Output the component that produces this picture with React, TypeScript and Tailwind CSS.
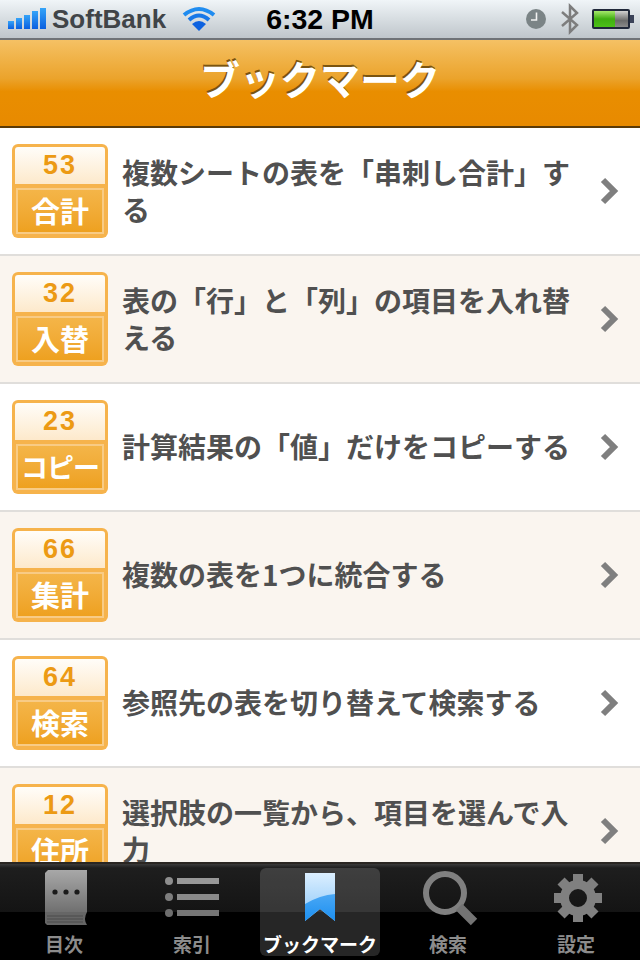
import React from "react";

const cjk = "font-['Noto_Sans_CJK_JP','Noto_Sans',sans-serif]";

const rows = [
  { n: "53", label: "合計", text: "複数シートの表を「串刺し合計」する" },
  { n: "32", label: "入替", text: "表の「行」と「列」の項目を入れ替える" },
  { n: "23", label: "コピー", text: "計算結果の「値」だけをコピーする" },
  { n: "66", label: "集計", text: "複数の表を1つに統合する" },
  { n: "64", label: "検索", text: "参照先の表を切り替えて検索する" },
  { n: "12", label: "住所", text: "選択肢の一覧から、項目を選んで入力" },
];

function Badge({ n, label }: { n: string; label: string }) {
  return (
    <div className="w-[96px] h-[94px] shrink-0 rounded-[6px] bg-[#f6b34c] p-[3px] flex flex-col">
      <div className="h-[37px] rounded-t-[3px] bg-gradient-to-b from-[#fffdf9] to-[#fde9cb] flex items-center justify-center text-[#ec9a14] text-[27px] font-bold tracking-[2px] font-['Liberation_Sans',sans-serif] leading-none">
        {n}
      </div>
      <div className="mt-[4px] flex-1 mb-[1px] mx-[1px] border-[2px] border-[#f8cb85] bg-gradient-to-b from-[#f4b548] to-[#eea11f] flex items-center justify-center text-white font-bold leading-none whitespace-nowrap">
        <span className={label.length > 2 ? "text-[27px] tracking-[-1px] pb-[2px]" : "text-[29px] pb-[2px]"}>{label}</span>
      </div>
    </div>
  );
}

function Chevron() {
  return (
    <svg width="20" height="28" viewBox="0 0 20 28" className="shrink-0">
      <path d="M3 3 L14 14 L3 25" fill="none" stroke="#7f7f7f" strokeWidth="6" />
    </svg>
  );
}

function Row({ n, label, text, alt }: { n: string; label: string; text: string; alt: boolean }) {
  return (
    <div className={`h-[128px] shrink-0 flex items-center pl-[12px] pr-[16px] border-b-2 border-[#e0dedb] ${alt ? "bg-[#faf5ef]" : "bg-white"}`}>
      <Badge n={n} label={label} />
      <div className="ml-[14px] w-[456px] mr-[22px] shrink-0 pb-[1px] text-[28px] leading-[37px] font-bold text-[#505050]">{text}</div>
      <Chevron />
    </div>
  );
}

function Signal() {
  return (
    <svg width="38" height="22" viewBox="0 0 38 22">
      <defs>
        <linearGradient id="sg" x1="0" y1="0" x2="0" y2="1">
          <stop offset="0" stopColor="#35a4f8" />
          <stop offset="1" stopColor="#0a5fe0" />
        </linearGradient>
      </defs>
      <rect x="0" y="13" width="6" height="8" fill="url(#sg)" />
      <rect x="8" y="10" width="6" height="11" fill="url(#sg)" />
      <rect x="16" y="7" width="6" height="14" fill="url(#sg)" />
      <rect x="24" y="3" width="6" height="18" fill="url(#sg)" />
      <rect x="32" y="0" width="6" height="21" fill="url(#sg)" />
    </svg>
  );
}

function Wifi() {
  return (
    <svg width="34" height="26" viewBox="0 0 34 26">
      <path d="M2 9 Q17 -3 32 9" fill="none" stroke="#1f8cf0" strokeWidth="4" />
      <path d="M7 14 Q17 5 27 14" fill="none" stroke="#1878e8" strokeWidth="4" />
      <path d="M17 25 L10 18 Q17 12 24 18 Z" fill="#0d62e0" />
    </svg>
  );
}

function Battery() {
  return (
    <svg width="42" height="22" viewBox="0 0 42 22">
      <defs>
        <linearGradient id="bg" x1="0" y1="0" x2="0" y2="1">
          <stop offset="0" stopColor="#a6e86c" />
          <stop offset="0.5" stopColor="#3fae10" />
          <stop offset="1" stopColor="#4cc018" />
        </linearGradient>
        <linearGradient id="bg2" x1="0" y1="0" x2="0" y2="1">
          <stop offset="0" stopColor="#d0d0d0" />
          <stop offset="0.6" stopColor="#6a6a6a" />
          <stop offset="1" stopColor="#8a8a8a" />
        </linearGradient>
      </defs>
      <rect x="0" y="1" width="38" height="20" rx="2" fill="#20283a" />
      <rect x="2" y="3" width="21" height="16" fill="url(#bg)" />
      <rect x="23" y="3" width="13" height="16" fill="url(#bg2)" />
      <rect x="38" y="7" width="4" height="8" fill="#3a4258" />
    </svg>
  );
}

function BookIcon() {
  return (
    <svg width="44" height="56" viewBox="0 0 44 56" className="ml-[6px]">
      <defs>
        <linearGradient id="book" x1="0" y1="0" x2="0" y2="1">
          <stop offset="0" stopColor="#a8a8a8" />
          <stop offset="1" stopColor="#707070" />
        </linearGradient>
      </defs>
      <path d="M3 0 H42 V42 H0 V3 Z" fill="url(#book)" />
      <path d="M0 42 H42 Q38 49 42 55 H2 L0 53 Z" fill="#666" />
      <path d="M2 46 H38 M2 49 H38 M2 52 H38" stroke="#4a4a4a" strokeWidth="1" />
      <circle cx="10" cy="22" r="2.6" fill="#1b1b1b" />
      <circle cx="21" cy="22" r="2.6" fill="#1b1b1b" />
      <circle cx="32" cy="22" r="2.6" fill="#1b1b1b" />
    </svg>
  );
}

function ListIcon() {
  return (
    <svg width="56" height="44" viewBox="0 0 56 44">
      <circle cx="5" cy="5" r="4" fill="#8e8e8e" />
      <circle cx="5" cy="21" r="4" fill="#7e7e7e" />
      <circle cx="5" cy="37" r="4" fill="#6e6e6e" />
      <rect x="13" y="2" width="42" height="6" fill="#989898" />
      <rect x="13" y="18" width="42" height="6" fill="#8a8a8a" />
      <rect x="13" y="34" width="42" height="6" fill="#767676" />
    </svg>
  );
}

function BookmarkIcon() {
  return (
    <svg width="32" height="50" viewBox="0 0 32 50">
      <defs>
        <linearGradient id="bm" x1="0" y1="0" x2="0" y2="1">
          <stop offset="0" stopColor="#dcefff" />
          <stop offset="0.6" stopColor="#a9d6fb" />
        </linearGradient>
        <linearGradient id="bm2" x1="0" y1="0" x2="0" y2="1">
          <stop offset="0" stopColor="#4aa8f5" />
          <stop offset="1" stopColor="#1c8ff0" />
        </linearGradient>
      </defs>
      <path d="M1 0 H31 V48 L16 36 L1 48 Z" fill="url(#bm)" />
      <path d="M1 31 Q16 22 31 21 V48 L16 36 L1 48 Z" fill="url(#bm2)" />
    </svg>
  );
}

function SearchIcon() {
  return (
    <svg width="56" height="56" viewBox="0 0 56 56" className="ml-[4px]">
      <circle cx="23" cy="23" r="19" fill="none" stroke="#808080" strokeWidth="6" />
      <path d="M37 37 L52 52" stroke="#747474" strokeWidth="9" />
    </svg>
  );
}

function GearIcon() {
  const teeth = [0, 45, 90, 135, 180, 225, 270, 315];
  return (
    <svg width="48" height="48" viewBox="0 0 48 48" className="ml-[4px]">
      {teeth.map((a) => (
        <rect key={a} x="19" y="0" width="10" height="12" fill="#808080" transform={`rotate(${a} 24 24)`} />
      ))}
      <circle cx="24" cy="24" r="13.5" fill="none" stroke="#808080" strokeWidth="9" />
    </svg>
  );
}

function Tab({ label, children, active }: { label: string; children: React.ReactNode; active?: boolean }) {
  return (
    <div className={`w-[120px] mx-[4px] h-[88px] shrink-0 flex flex-col items-center rounded-[6px] ${active ? "bg-white/15" : ""}`}>
      <div className="h-[60px] flex items-center justify-center">{children}</div>
      <div className={`text-[19px] leading-[24px] font-bold whitespace-nowrap mt-[4px] ${active ? "text-white" : "text-[#8c8c8c]"}`}>{label}</div>
    </div>
  );
}

export default function App() {
  return (
    <div className={`w-[640px] h-[960px] overflow-hidden flex flex-col ${cjk}`}>
      <div className="h-[40px] shrink-0 flex items-center pl-[8px] pr-[6px] bg-gradient-to-b from-[#f0f5f8] to-[#bfc6cb] border-b-2 border-[#6f7377] font-['Liberation_Sans',sans-serif]">
        <Signal />
        <span className="ml-[6px] text-[26px] font-bold text-[#404448] leading-none">SoftBank</span>
        <span className="ml-[16px]"><Wifi /></span>
        <span className="ml-[50px] text-[28.5px] font-bold text-black leading-none whitespace-nowrap">6:32 PM</span>
        <div className="ml-auto flex items-center">
          <svg width="20" height="20" viewBox="0 0 20 20" className="mr-[14px]">
            <circle cx="10" cy="10" r="10" fill="#7b8486" />
            <path d="M10.5 3.5 V11 H5" fill="none" stroke="#f2f2f2" strokeWidth="1.6" />
          </svg>
          <svg width="20" height="32" viewBox="0 0 20 32" className="mr-[12px]">
            <path d="M2 9 L17 22 L10 29 V3 L17 10 L2 23" fill="none" stroke="#7d7d7d" strokeWidth="2.5" />
          </svg>
          <Battery />
        </div>
      </div>
      <div className="h-[88px] shrink-0 flex items-center justify-center pb-[10px] bg-[linear-gradient(#f5c164,#eba32b_45%,#e98e00_60%,#e88a00)] border-b-2 border-[#5a3a08]">
        <span className="text-[40px] font-bold text-white leading-none [text-shadow:-1px_-2px_0_#7a5410]">ブックマーク</span>
      </div>
      <div className="flex-1 min-h-0 overflow-hidden flex flex-col">
        {rows.map((r, i) => (
          <Row key={r.n} {...r} alt={i % 2 === 1} />
        ))}
      </div>
      <div className="h-[98px] shrink-0 border-t-2 border-[#2a2622] bg-[linear-gradient(#3a3a3a_0,#1e1e1e_4px,#141414_50%,#000_50%,#000)] flex items-end justify-center pb-[4px]">
        <Tab label="目次"><BookIcon /></Tab>
        <Tab label="索引"><ListIcon /></Tab>
        <Tab label="ブックマーク" active><BookmarkIcon /></Tab>
        <Tab label="検索"><SearchIcon /></Tab>
        <Tab label="設定"><GearIcon /></Tab>
      </div>
    </div>
  );
}
